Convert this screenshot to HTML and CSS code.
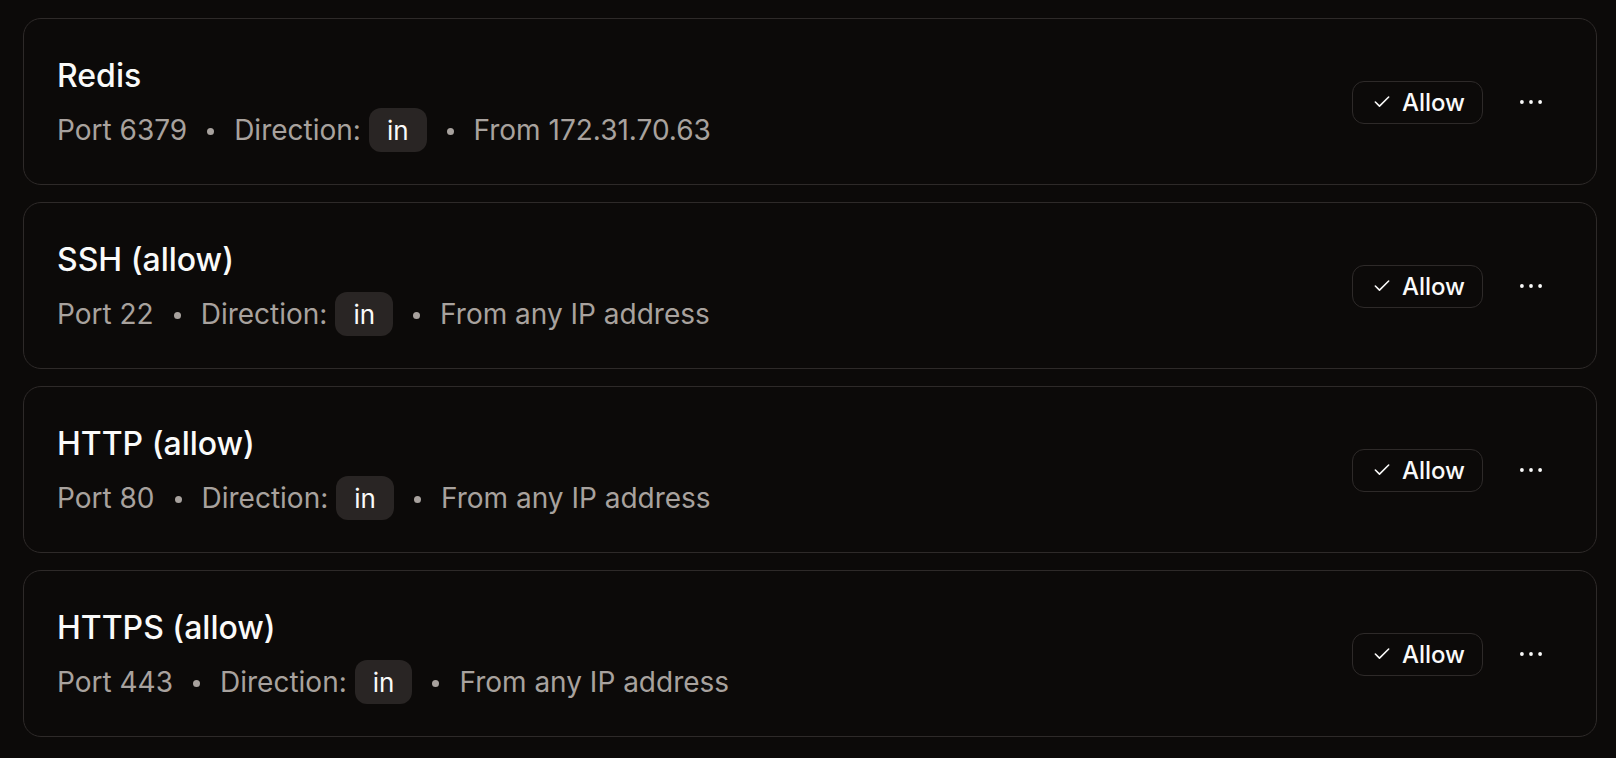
FILE: index.html
```html
<!DOCTYPE html>
<html lang="en">
<head>
<meta charset="utf-8">
<title>Firewall rules</title>
<link rel="stylesheet" href="styles.css">
</head>
<body>
<main class="rules">
  <section class="rule">
    <div class="rule-info">
      <h2 class="rule-title">Redis</h2>
      <div class="rule-meta">
        <span>Port 6379</span>
        <span class="sep"></span>
        <span class="dir"><span>Direction:</span><span class="chip">in</span></span>
        <span class="sep"></span>
        <span>From 172.31.70.63</span>
      </div>
    </div>
    <div class="rule-actions">
      <button class="allow"><svg class="check" viewBox="0 0 24 24" width="20" height="20"><path d="M20 6 9 17l-5-5"/></svg><span>Allow</span></button>
      <button class="more" aria-label="More"><svg viewBox="0 0 32 32" width="32" height="32"><circle cx="6.9" cy="16" r="1.9"/><circle cx="16" cy="16" r="1.9"/><circle cx="25.1" cy="16" r="1.9"/></svg></button>
    </div>
  </section>
  <section class="rule">
    <div class="rule-info">
      <h2 class="rule-title">SSH (allow)</h2>
      <div class="rule-meta">
        <span>Port 22</span>
        <span class="sep"></span>
        <span class="dir"><span>Direction:</span><span class="chip">in</span></span>
        <span class="sep"></span>
        <span>From any IP address</span>
      </div>
    </div>
    <div class="rule-actions">
      <button class="allow"><svg class="check" viewBox="0 0 24 24" width="20" height="20"><path d="M20 6 9 17l-5-5"/></svg><span>Allow</span></button>
      <button class="more" aria-label="More"><svg viewBox="0 0 32 32" width="32" height="32"><circle cx="6.9" cy="16" r="1.9"/><circle cx="16" cy="16" r="1.9"/><circle cx="25.1" cy="16" r="1.9"/></svg></button>
    </div>
  </section>
  <section class="rule">
    <div class="rule-info">
      <h2 class="rule-title">HTTP (allow)</h2>
      <div class="rule-meta">
        <span>Port 80</span>
        <span class="sep"></span>
        <span class="dir"><span>Direction:</span><span class="chip">in</span></span>
        <span class="sep"></span>
        <span>From any IP address</span>
      </div>
    </div>
    <div class="rule-actions">
      <button class="allow"><svg class="check" viewBox="0 0 24 24" width="20" height="20"><path d="M20 6 9 17l-5-5"/></svg><span>Allow</span></button>
      <button class="more" aria-label="More"><svg viewBox="0 0 32 32" width="32" height="32"><circle cx="6.9" cy="16" r="1.9"/><circle cx="16" cy="16" r="1.9"/><circle cx="25.1" cy="16" r="1.9"/></svg></button>
    </div>
  </section>
  <section class="rule">
    <div class="rule-info">
      <h2 class="rule-title">HTTPS (allow)</h2>
      <div class="rule-meta">
        <span>Port 443</span>
        <span class="sep"></span>
        <span class="dir"><span>Direction:</span><span class="chip">in</span></span>
        <span class="sep"></span>
        <span>From any IP address</span>
      </div>
    </div>
    <div class="rule-actions">
      <button class="allow"><svg class="check" viewBox="0 0 24 24" width="20" height="20"><path d="M20 6 9 17l-5-5"/></svg><span>Allow</span></button>
      <button class="more" aria-label="More"><svg viewBox="0 0 32 32" width="32" height="32"><circle cx="6.9" cy="16" r="1.9"/><circle cx="16" cy="16" r="1.9"/><circle cx="25.1" cy="16" r="1.9"/></svg></button>
    </div>
  </section>
</main>
</body>
</html>
```

FILE: styles.css
```css
* { box-sizing: border-box; }

html, body {
  margin: 0;
  padding: 0;
  background: #0c0a09;
  height: 100%;
  overflow: hidden;
}

body {
  font-family: Inter, "Noto Sans", "Liberation Sans", sans-serif;
  color: #fafaf9;
}

.rules {
  display: flex;
  flex-direction: column;
  gap: 17px;
  padding: 18px 0 0 23px;
  width: 1597px;
}

.rule {
  display: flex;
  align-items: center;
  justify-content: space-between;
  height: 167px;
  border: 1px solid #2e2a29;
  border-radius: 18px;
  padding: 33px 45px 32px 33px;
  background: #0c0a09;
}

.rule-info {
  display: flex;
  flex-direction: column;
  gap: 8px;
}

.rule-title {
  margin: 0;
  font-size: 32px;
  line-height: 48px;
  font-weight: 500;
  color: #fafaf9;
}

.rule-meta {
  display: flex;
  align-items: center;
  gap: 20px;
  height: 44px;
  font-size: 28px;
  line-height: 40px;
  color: #a8a29e;
}

.sep {
  width: 7px;
  height: 7px;
  border-radius: 50%;
  background: #a8a29e;
  margin-top: 3px;
}

.dir {
  display: flex;
  align-items: center;
  gap: 8px;
}

.chip {
  display: inline-block;
  height: 44px;
  padding: 1px 18px 0;
  font-size: 26px;
  line-height: 43px;
  color: #fafaf9;
  background: #292524;
  border-radius: 12px;
}

.rule-actions {
  display: flex;
  align-items: center;
  gap: 28px;
}

.allow {
  display: flex;
  align-items: center;
  gap: 10px;
  height: 43px;
  padding: 0 17px 0 19px;
  background: transparent;
  border: 1px solid #2e2a29;
  border-radius: 12px;
  font-family: inherit;
  font-size: 24px;
  font-weight: 500;
  color: #fafaf9;
}

.check {
  fill: none;
  stroke: #fafaf9;
  stroke-width: 1.9;
  stroke-linecap: round;
  stroke-linejoin: round;
}

.more {
  display: flex;
  align-items: center;
  justify-content: center;
  width: 40px;
  height: 40px;
  padding: 0;
  background: transparent;
  border: none;
}

.more svg { fill: #fafaf9; }
```
